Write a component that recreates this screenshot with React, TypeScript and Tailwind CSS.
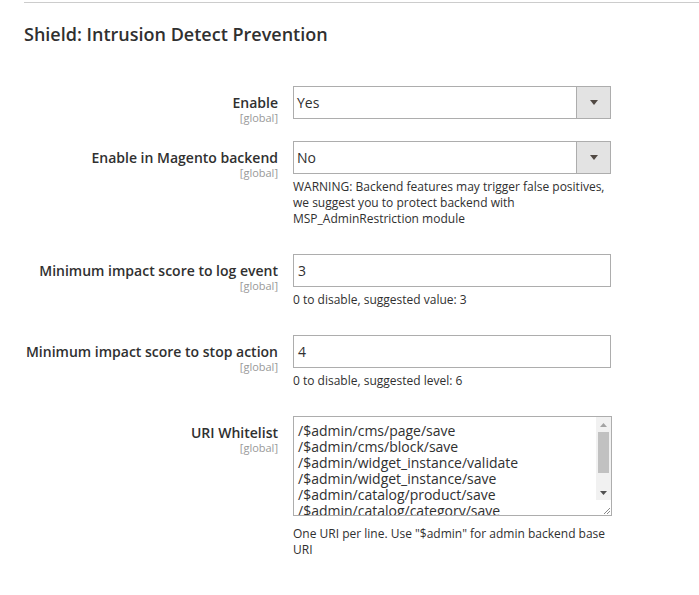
import React from "react";

const font = { fontFamily: '"Open Sans", "Liberation Sans", sans-serif' };

function Label({ text }: { text: string }) {
  return (
    <div className="w-[254px] h-[33px] shrink-0 text-right pt-[8px]">
      <div className="text-[14px] leading-[18px] font-semibold text-[#303030] whitespace-nowrap">{text}</div>
      <div className="text-[11px] leading-[11px] text-[#999999]">[global]</div>
    </div>
  );
}

function Select({ value }: { value: string }) {
  return (
    <div className="flex h-[33px] w-[318px] border border-[#adadad] bg-white">
      <div className="flex-1 pl-[3px] flex items-center text-[14px] text-[#303030]">{value}</div>
      <div className="w-[34px] border-l border-[#adadad] bg-[#e3e3e3] flex items-center justify-center">
        <svg width="8" height="5" viewBox="0 0 8 5">
          <path d="M0 0 H8 L4 5 Z" fill="#514943" />
        </svg>
      </div>
    </div>
  );
}

function Input({ value }: { value: string }) {
  return (
    <div className="flex h-[33px] w-[318px] border border-[#adadad] bg-white pl-[4px] items-center text-[14px] text-[#303030]">
      {value}
    </div>
  );
}

function Note({ children, className = "mt-[5px]" }: { children: React.ReactNode; className?: string }) {
  return <div className={`${className} text-[12px] leading-[16px] text-[#303030] w-[318px]`}>{children}</div>;
}

function FakeScrollbar() {
  return (
    <div className="absolute right-[1px] top-[1px] bottom-[1px] w-[15px] flex flex-col">
      <div className="flex-1 bg-[#f1f1f1] flex flex-col items-center">
        <div className="h-[15px] w-full flex items-center justify-center">
          <svg width="7" height="4" viewBox="0 0 7 4">
            <path d="M0 4 H7 L3.5 0 Z" fill="#a3a3a3" />
          </svg>
        </div>
        <div className="w-[11px] h-[41px] bg-[#c1c1c1]" />
        <div className="flex-1" />
        <div className="h-[15px] w-full flex items-center justify-center">
          <svg width="7" height="4" viewBox="0 0 7 4">
            <path d="M0 0 H7 L3.5 4 Z" fill="#505050" />
          </svg>
        </div>
      </div>
      <div className="h-[15px] w-full bg-white flex items-end justify-end">
        <svg width="10" height="10" viewBox="0 0 10 10">
          <path d="M9 3 L3 9 M9 6 L6 9" stroke="#8a8a8a" strokeWidth="1" />
        </svg>
      </div>
    </div>
  );
}

export default function App() {
  const lines = [
    "/$admin/cms/page/save",
    "/$admin/cms/block/save",
    "/$admin/widget_instance/validate",
    "/$admin/widget_instance/save",
    "/$admin/catalog/product/save",
    "/$admin/catalog/category/save",
    "/$admin/catalog/product_attribute/save",
    "/$admin/system_config/save",
    "/$admin/cms/wysiwyg_images/upload",
  ].join("\n");
  return (
    <div className="w-[699px] h-[595px] bg-white overflow-hidden" style={font}>
      <div className="ml-[24px] mt-[2px] h-px bg-[#cccccc]" />
      <div className="pl-[24px] pt-[20px] text-[18px] leading-[22px] font-semibold text-[#303030]">
        Shield: Intrusion Detect Prevention
      </div>
      <div className="pl-[24px] pt-[41px]">
        <div className="flex gap-[15px]">
          <Label text="Enable" />
          <Select value="Yes" />
        </div>
        <div className="flex gap-[15px] mt-[22px]">
          <Label text="Enable in Magento backend" />
          <div>
            <Select value="No" />
            <Note>
              WARNING: Backend features may trigger false positives, we suggest you to protect backend with MSP_AdminRestriction module
            </Note>
          </div>
        </div>
        <div className="flex gap-[15px] mt-[27px]">
          <Label text="Minimum impact score to log event" />
          <div>
            <Input value="3" />
            <Note>0 to disable, suggested value: 3</Note>
          </div>
        </div>
        <div className="flex gap-[15px] mt-[27px]">
          <Label text="Minimum impact score to stop action" />
          <div>
            <Input value="4" />
            <Note>0 to disable, suggested level: 6</Note>
          </div>
        </div>
        <div className="flex gap-[15px] mt-[27px]">
          <Label text="URI Whitelist" />
          <div>
            <div className="relative w-[319px] h-[100px]">
              <textarea
                readOnly
                defaultValue={lines}
                className="block w-[319px] h-[100px] border border-[#adadad] pl-[4px] pr-[16px] pt-[6px] text-[14px] leading-[16px] text-[#303030] overflow-hidden resize-none outline-none whitespace-pre"
                style={font}
              />
              <FakeScrollbar />
            </div>
            <Note className="mt-[10px]">One URI per line. Use "$admin" for admin backend base URI</Note>
          </div>
        </div>
      </div>
    </div>
  );
}
